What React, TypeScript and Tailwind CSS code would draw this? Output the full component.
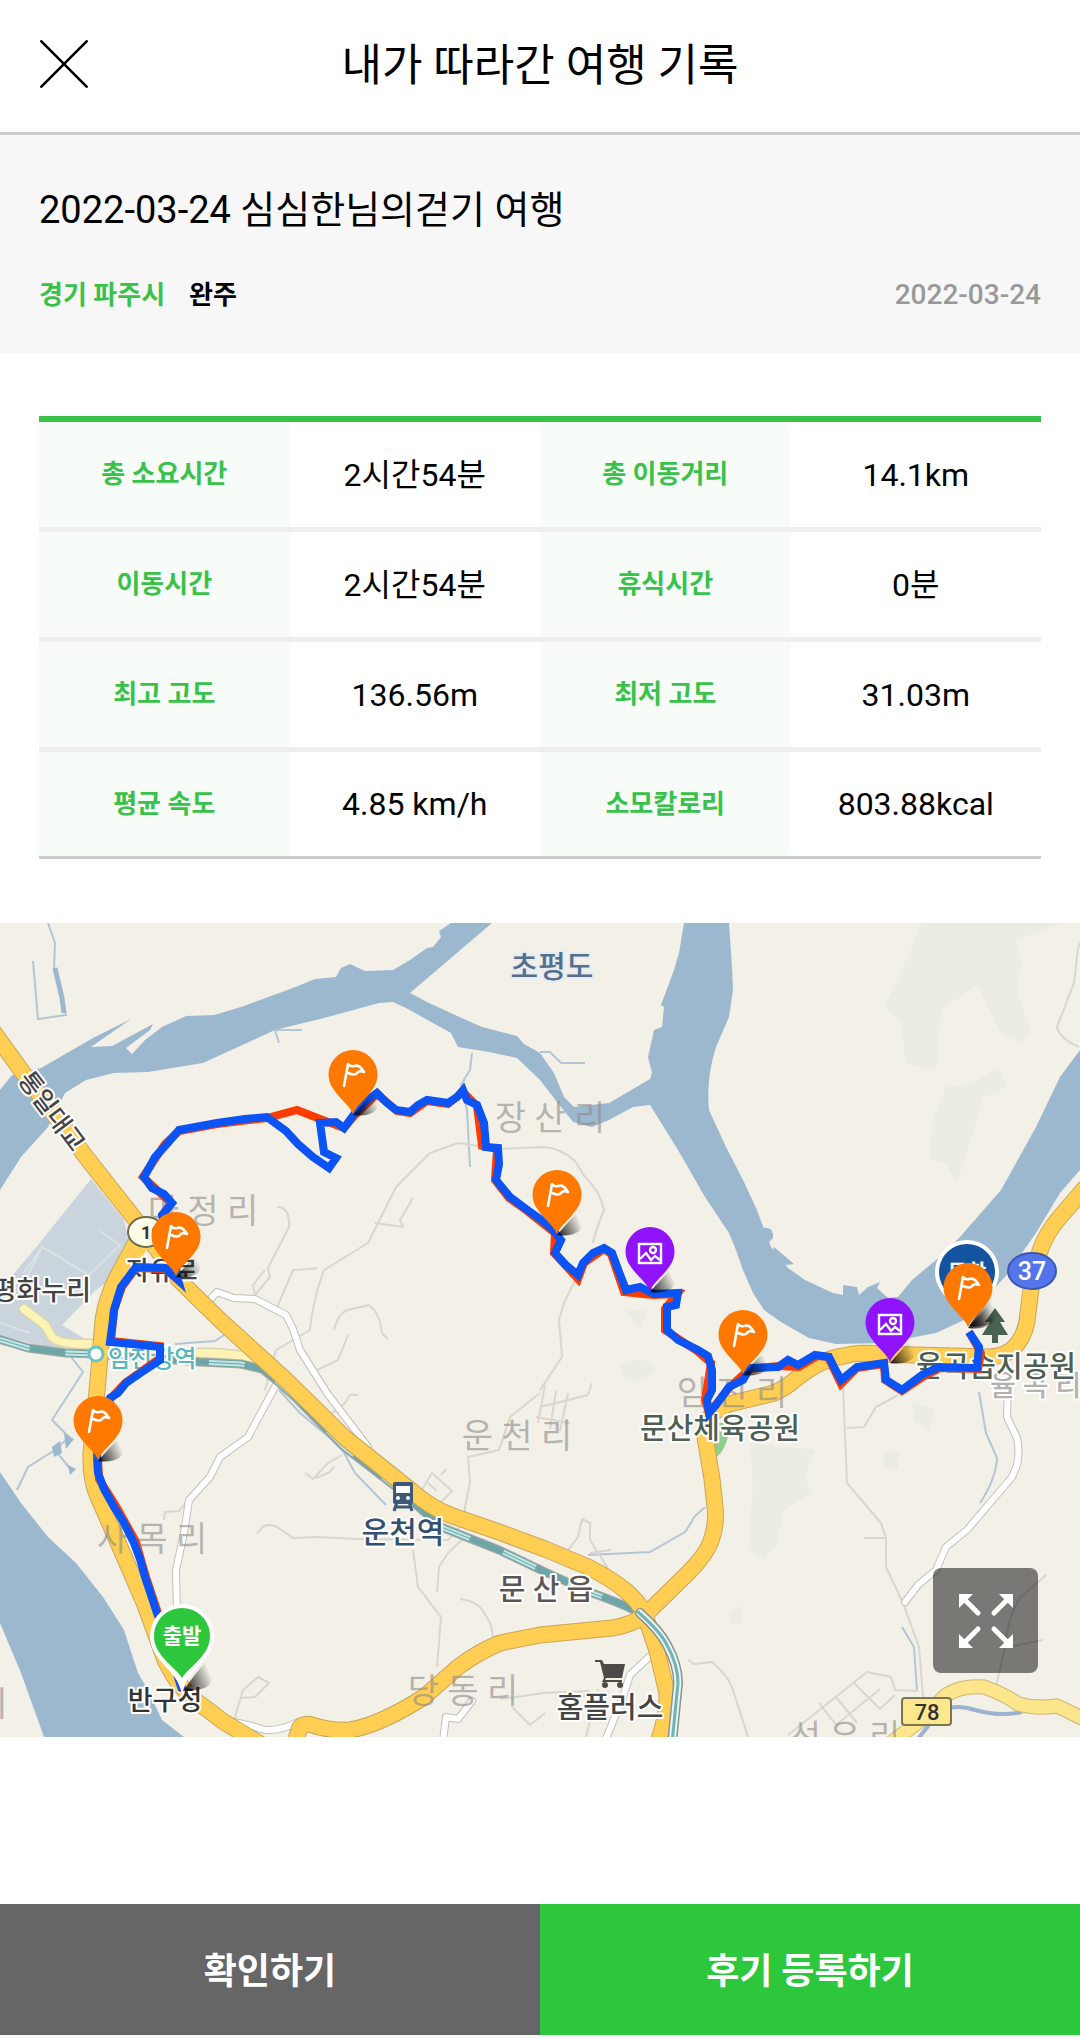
type Stat = { label: string; value: string };

type Point = { x: number; y: number };

type MapLabelProps = Point & {
  text: string;
  size?: number;
  color?: string;
  halo?: string;
  anchor?: "start" | "middle" | "end";
};

const statRows: [Stat, Stat][] = [
  [
    { label: "총 소요시간", value: "2시간54분" },
    { label: "총 이동거리", value: "14.1km" },
  ],
  [
    { label: "이동시간", value: "2시간54분" },
    { label: "휴식시간", value: "0분" },
  ],
  [
    { label: "최고 고도", value: "136.56m" },
    { label: "최저 고도", value: "31.03m" },
  ],
  [
    { label: "평균 속도", value: "4.85 km/h" },
    { label: "소모칼로리", value: "803.88kcal" },
  ],
];

const flagPins: Point[] = [
  { x: 353, y: 152 },
  { x: 176, y: 314 },
  { x: 98, y: 498 },
  { x: 557, y: 272 },
  { x: 743, y: 412 },
  { x: 968, y: 365 },
];

const photoPins: Point[] = [
  { x: 650, y: 329 },
  { x: 890, y: 400 },
];

const townLabels = [
  { text: "장 산 리", x: 550, y: 207 },
  { text: "마 정 리", x: 203, y: 300 },
  { text: "운 천 리", x: 517, y: 525 },
  { text: "사 목 리", x: 152, y: 628 },
  { text: "당 동 리", x: 463, y: 780 },
  { text: "임 진 리", x: 732, y: 482 },
  { text: "선 유 리", x: 845, y: 826 },
  { text: "리", x: -8, y: 793 },
];

const highways = [
  "M-10 104L0 118L21 147L86 234L138 300L179 357L222 399L286 457L344 514L413 569Q430 584 450 592L499 609L545 626L588 644Q612 656 626 668Q640 680 645 692L657 728L667 770Q668 790 658 820",
  "M140 312L117 354Q106 376 103 397L98 457L91 530Q90 556 98 574L120 624L145 682L165 737Q178 764 196 778L224 799L262 822",
  "M294 822L300 804Q306 800 312 802Q330 808 350 807Q380 802 424 774L458 744Q480 728 500 720L540 712L612 705Q632 702 645 692L688 650Q706 632 711 618Q717 602 715 584L712 556L705 514Q706 496 714 489L729 481L774 470Q784 466 796 456Q820 436 844 433Q858 429 880 431L988 434Q1008 434 1018 420Q1027 408 1028 390L1031 366Q1034 345 1040 328Q1046 310 1060 294L1084 266",
];

const whiteRoads = [
  "M210 377L217 369L234 375L255 376L286 392L293 406L300 427L327 470L368 524",
  "M276 462L248 514L220 534L210 554L189 577L184 610L176 647L177 690",
  "M234 799Q250 802 265 807Q280 808 298 799",
  "M443 818L446 794L458 796L472 778",
  "M605 818L623 774L630 752L649 734",
  "M1008 457L1007 494L1017 515Q1020 530 1017 542L1012 554L967 607L946 624L936 647L918 662L905 679",
];

const lanes = [
  "M593 320Q596 306 604 287Q600 268 585 254L575 238Q562 226 545 224L499 226L458 220L430 230L396 264Q378 300 368 320L324 347Q312 380 310 407L276 427L265 467",
  "M578 352L564 380L559 397L562 434L540 467",
  "M277 284Q290 284 289 304L268 345L270 354L255 372L253 362L265 347",
  "M317 345L310 346L293 347L276 387",
  "M334 407Q338 390 348 387L369 382Q380 390 382 410L388 416",
  "M413 275L400 297L403 304L375 300",
  "M348 412L338 437L317 447",
  "M257 610L264 603Q272 600 280 606L293 615L317 614L358 616L448 617Q466 600 465 584L470 560L468 534L499 527L510 494L540 470",
  "M413 627L418 664L441 694L437 744",
  "M467 612L448 630L439 644L437 669",
  "M460 676Q478 678 484 690Q492 700 493 714",
  "M164 597L165 589L179 588L192 572",
  "M234 797L243 767L258 754L269 760L255 774L241 775",
  "M305 550L313 556L328 540L342 532M316 555L330 549L334 543",
  "M330 492L345 480L350 472L358 472",
  "M420 570L432 550L452 568L440 580ZM428 560L437 568M441 552L446 546",
  "M843 464L847 560L881 600L886 615L886 644L903 680L919 724L924 785M864 615L885 615",
  "M898 472L876 484L864 504L847 505",
  "M688 737L694 741L712 739Q728 752 733 767L748 814",
  "M788 812L867 749L891 754L895 767L918 768M836 774L857 800M853 759L880 786M880 786L895 772M819 780L836 802L880 766",
  "M568 627L578 614L582 596L590 600L590 617L609 647M590 630L611 627",
  "M1084 12L1078 25L1074 60L1057 104Q1060 116 1079 124",
  "M1046 652L1020 675Q1008 692 1005 724L995 768M1043 717L1008 724",
  "M540 484L588 472M545 462L538 500M556 468L550 506M568 470L560 508M536 494L570 500M588 472L592 460",
  "M500 776L545 770M512 784L530 802L545 790",
  "M540 770L590 768M560 790L585 772M598 766L586 814M608 768L600 800",
];

const streams = [
  "M48 0L55 20L54 48L62 75L66 92L38 96L33 38",
  "M472 130L470 147L461 162L467 187L470 244",
  "M540 129L550 129L561 140L585 140",
  "M71 434L83 449L52 497L69 514L55 527L72 548M55 527L28 544L17 567",
  "M279 467L300 490L341 524L355 550L386 582",
  "M705 584L694 594Q690 602 685 609L650 629L588 632",
  "M979 469L986 510L997 535Q996 556 980 580",
  "M902 704L914 724L917 768",
  "M175 421L215 418L224 412",
  "M275 107L279 120M275 107L302 107",
];

const rail =
  "M-5 415L28 425L65 430L96 431L200 439L241 441L262 446L276 457L296 475L344 524L396 564L441 604L499 627L545 649L592 670Q626 682 643 692Q660 708 667 722Q678 742 678 760L672 820";

const route =
  "M182 767L172 735L163 705L157 690L151 672L145 654L140 636L134 620L124 600L114 584L104 566L98 550L97 534M97 534L99 500L110 475L118 470L126 460L142 449L160 437L160 424L132 421L110 419L113 397L114 387L121 364L136 344L165 345L178 357L170 330L162 292L172 280L164 271L152 265L144 254L155 234L166 222L179 207L217 200L245 196L267 194L286 208L298 221L313 234L329 245L336 235L324 229L320 200L336 199L344 205L355 190L366 178L377 170L386 179L396 187L410 189L418 182L427 177L448 180L457 174L463 167L467 177L477 182L484 200L486 224L498 225L499 241L496 257L510 274L526 286L540 296L552 306L561 317L555 330L566 342L578 352L583 340L593 330L604 325L612 330L619 349L626 367L640 364L654 371L678 370L676 382L667 384L667 407L678 417L698 427L708 433L712 447L712 467L707 477L709 490L716 482L729 464L743 457L750 445L778 444L788 437L798 442L815 432L829 434L835 446L841 457L857 444L884 440L886 457L902 467L922 452L939 444L977 445L979 424L969 409";

// red course line, the recorded track is painted over it
const course =
  "M183 768L173 735L158 690L146 654L136 619L116 583L99 556L98 534M100 500L111 475L125 460L160 435L160 423L111 418L114 387L122 364L136 345L165 346L178 357M163 292L171 280L143 254L165 221L179 208L217 201L267 195L297 187L320 196L344 205L356 191L377 171L397 188L410 190L427 178L448 181L463 169L477 183L482 223L497 226L495 257L509 275L526 287L555 310L554 330L578 356L584 340L604 326L611 331L624 369L653 372L677 371L665 386L665 407L697 428L711 440L705 477L709 490L729 465L749 446L778 443L799 444L817 433L828 434L841 461L857 445L884 441L885 457L902 468L923 454L940 445L978 446L981 430L969 409";

const rivers = [
  "M0 167L12 152L41 145L93 115L131 96L91 124L112 123L153 101L150 107L126 125L132 131L145 117L162 104L186 93L214 92L241 84L293 65L315 56L336 54L341 45L350 41L365 48L393 47L410 37L427 25L433 24L441 14L439 8L451 0L492 0L410 70L427 79L455 92L482 104L517 113L524 121L540 130L554 150L564 174L574 184L609 180L650 156L652 150L648 134L654 107L662 104L664 84L661 82L674 47L679 30L684 0L729 0L732 44L733 67L729 94L716 124Q706 155 709 187L726 224L743 257L757 287L764 306L771 324L788 345L805 357L833 370L843 372L843 362L857 364L859 372L868 364L880 359L877 365L888 375L898 374L912 357L936 337L960 314L1001 267L1036 204L1060 154L1080 127V247L1060 270L1036 310L1005 354L964 397L936 410L884 420L836 421L809 415L781 399L764 387L753 370L743 347L736 327L729 310L705 274L678 227L650 182L633 184L609 197L592 204L573 199L557 179L540 157L517 135L489 129L458 124L451 110L406 85L393 79L379 80L324 95L275 107L238 124L203 140L148 149L114 150L86 157L65 170L48 204L21 234L0 267Z",
  "M0 549L21 580L48 614L76 640L103 674L124 707L138 750L148 767L162 797L184 814H44L21 750L0 700Z",
  "M763 305Q774 303 773 315L768 320L763 312M774 324L794 341L786 342L772 330Z",
];

const greens = [
  "M922 0L902 47L884 84L902 100L905 140L936 149L941 87L977 62L1001 110L1022 122L1031 107L1017 70L1022 40L1015 17L1063 0Z",
  "M946 164L974 160L998 144L1007 164L984 174L970 220L957 260L945 240L929 237L933 194Z",
  "M750 520L815 527L805 554L812 570L784 587L776 622L764 637L748 627L753 564Z",
  "M620 442Q640 430 655 444Q650 462 625 456ZM912 480L935 486L930 508L914 498ZM884 530L900 528L898 546L884 544ZM728 690L740 682L742 700L730 702ZM626 388L648 386L640 406Z",
];

function MapLabel({
  text,
  x,
  y,
  size = 28,
  color = "#444444",
  halo = "#ffffff",
  anchor = "middle",
}: MapLabelProps) {
  return (
    <text
      x={x}
      y={y}
      fontSize={size}
      fill={color}
      stroke={halo}
      strokeWidth={4}
      strokeLinejoin="round"
      paintOrder="stroke"
      textAnchor={anchor}
      className="font-medium"
    >
      {text}
    </text>
  );
}

function PinBody({ x, y, color }: Point & { color: string }) {
  return (
    <g transform={`translate(${x} ${y})`}>
      <path d="M0 40Q12 26 20 18Q30 28 22 36Q14 42 0 40Z" fill="url(#pin-shadow)" />
      <path d="M0 39C-3 31-13 24-19 15A24.5 24.5 0 1 1 19 15C13 24 3 31 0 39Z" fill={color} />
    </g>
  );
}

function FlagPin({ x, y }: Point) {
  return (
    <g>
      <PinBody x={x} y={y} color="#ff7800" />
      <path
        transform={`translate(${x} ${y})`}
        d="M-9 11L-5 -11Q-3 -8 1 -9Q5 -10 7 -8Q9 -6 11 -3Q6 -5 4 -2Q2 1 -5 -2"
        fill="none"
        stroke="#ffffff"
        strokeWidth="2.6"
        strokeLinecap="round"
        strokeLinejoin="round"
      />
    </g>
  );
}

function PhotoPin({ x, y }: Point) {
  return (
    <g>
      <PinBody x={x} y={y} color="#9013fe" />
      <g transform={`translate(${x} ${y})`} fill="none" stroke="#ffffff" strokeWidth="2.4">
        <rect x="-11" y="-8" width="22" height="19" />
        <circle cx="3" cy="-2" r="3" />
        <path d="M-10 7L-4 1L1 8L5 4L10 8" />
      </g>
    </g>
  );
}

function EndPin({ x, y, color, text }: Point & { color: string; text: string }) {
  return (
    <g transform={`translate(${x} ${y})`}>
      <path d="M2 54Q14 36 24 26Q36 40 26 50Q16 56 2 54Z" fill="url(#pin-shadow)" />
      <path
        d="M0 46C-4 36-16 27-23 16A28 28 0 1 1 23 16C16 27 4 36 0 46Z"
        fill="#ffffff"
        stroke="#ffffff"
        strokeWidth="8"
      />
      <path d="M0 42C-4 35-16 27-23 16A28 28 0 1 1 23 16C16 27 4 35 0 42Z" fill={color} />
      <text y="7" fontSize="21" fill="#ffffff" textAnchor="middle" className="font-bold">
        {text}
      </text>
    </g>
  );
}

function RouteMap() {
  return (
    <svg
      viewBox="0 0 1080 814"
      className="block h-auto w-full bg-[#f3f0e8]"
      role="img"
      aria-label="이동 경로 지도"
    >
      <defs>
        <linearGradient id="pin-shadow" x1="0" y1="1" x2="1" y2="0.6">
          <stop offset="0" stopColor="#000000" stopOpacity="0.9" />
          <stop offset="1" stopColor="#000000" stopOpacity="0" />
        </linearGradient>
      </defs>

      {greens.map((d) => (
        <path key={d} d={d} fill="#ebece4" />
      ))}
      <path d="M91 256L124 297L129 320L114 354L96 367L62 402L88 418L60 428L0 412V367L34 327Z" fill="#c9d4dc" />
      <path d="M20 368L42 324L89 352L120 322L100 308M42 324L24 350M0 400L30 410" fill="none" stroke="#dbe2e6" strokeWidth="2" />
      {rivers.map((d) => (
        <path key={d} d={d} fill="#9cb8cf" />
      ))}
      <g fill="none" stroke="#b4c6d6" strokeWidth="2">
        {streams.map((d) => (
          <path key={d} d={d} />
        ))}
        <path d="M55 45L62 75L64 90" strokeWidth="5" stroke="#9cb8cf" />
        <path d="M918 816L939 789Q955 780 975 787Q1000 794 1022 789" strokeWidth="4" stroke="#9cb3d0" />
      </g>
      <path d="M64 510L74 516L66 526ZM52 524L60 518L62 530L54 534ZM68 542L76 546L70 552Z" fill="#9cb8cf" />
      <g fill="none" stroke="#d9d6cf" strokeWidth="2" strokeLinejoin="round">
        {lanes.map((d) => (
          <path key={d} d={d} />
        ))}
      </g>
      <path d="M700 500H730Q728 532 708 539Z" fill="#8fce8a" />

      <g fill="none" strokeLinejoin="round" strokeLinecap="round">
        <g stroke="#c2c0ba" strokeWidth="8">
          {whiteRoads.map((d) => (
            <path key={d} d={d} />
          ))}
        </g>
        <g stroke="#ffffff" strokeWidth="6">
          {whiteRoads.map((d) => (
            <path key={d} d={d} />
          ))}
        </g>
        <path d="M24 386L45 402L52 414Q60 422 92 421M198 430Q240 430 262 438" stroke="#d8d3b0" strokeWidth="11" />
        <path d="M24 386L45 402L52 414Q60 422 92 421M198 430Q240 430 262 438" stroke="#fdf3b4" strokeWidth="8" />
        <path d="M891 820L922 796L946 772Q962 762 984 764Q1006 772 1018 781Q1036 786 1057 783L1086 797" stroke="#cbb777" strokeWidth="15" />
        <path d="M891 820L922 796L946 772Q962 762 984 764Q1006 772 1018 781Q1036 786 1057 783L1086 797" stroke="#fde58c" strokeWidth="13" />
        <path d={rail} stroke="#a9abaa" strokeWidth="9" />
        <path d={rail} stroke="#73a5a7" strokeWidth="7" strokeLinecap="butt" />
        <path d={rail} stroke="#c3e6e5" strokeWidth="5" strokeDasharray="36 36" strokeLinecap="butt" />
        <path d={rail} stroke="#5fa9a9" strokeWidth="1" />
        <g stroke="#c9a659" strokeWidth="17">
          {highways.map((d) => (
            <path key={d} d={d} />
          ))}
        </g>
        <g stroke="#ffce52" strokeWidth="15">
          {highways.map((d) => (
            <path key={d} d={d} />
          ))}
        </g>
        <path d="M138 304L139 322L126 342" stroke="#ffce52" strokeWidth="18" />
        <path d="M640 690Q660 708 667 722Q678 742 678 760L672 820" stroke="#8d9493" strokeWidth="10" />
        <path d="M640 690Q660 708 667 722Q678 742 678 760L672 820" stroke="#e9f5f4" strokeWidth="7" />
        <path d="M638 689Q660 708 667 722Q678 742 678 760L672 820" stroke="#6fb3b3" strokeWidth="3" />
      </g>

      {townLabels.map((l) => (
        <text
          key={l.text}
          x={l.x}
          y={l.y}
          fontSize={34}
          fill="#8d8a88"
          fillOpacity={0.6}
          textAnchor="middle"
        >
          {l.text}
        </text>
      ))}
      <MapLabel text="율 곡 리" x={990} y={473} anchor="start" color="#b4b2ae" />
      <MapLabel text="초평도" x={552} y={54} size={30} color="#54708c" halo="#e6ecf2" />
      <g transform="translate(52 188) rotate(53)">
        <MapLabel text="통일대교" x={0} y={9} size={25} />
      </g>
      <MapLabel text="평화누리" x={91} y={377} size={27} anchor="end" />
      <ellipse cx="146" cy="309" rx="18" ry="15" fill="#fdfce6" stroke="#6c6b52" strokeWidth="2" />
      <text x="141" y="316" fontSize="18" fill="#333333" className="font-bold">
        10
      </text>
      <MapLabel text="자유로" x={126} y={357} size={26} anchor="start" />
      <circle cx="96" cy="431" r="7" fill="#ffffff" stroke="#6cc3c3" strokeWidth="3" />
      <MapLabel text="임진강역" x={108} y={444} size={24} anchor="start" color="#55b8bc" />
      <MapLabel text="운천역" x={403} y={620} size={30} color="#34506f" />
      <MapLabel text="문 산 읍" x={546} y={677} size={29} color="#5f5654" />
      <MapLabel text="반구정" x={165} y={787} size={27} color="#333333" />
      <MapLabel text="홈플러스" x={610} y={795} size={29} />
      <MapLabel text="문산체육공원" x={720} y={516} size={29} color="#4d5f53" />
      <MapLabel text="율곡습지공원" x={996} y={454} size={29} color="#4d5f53" />

      <g transform="translate(403 559)">
        <path d="M-6 20L-9 29M6 20L9 29M-7 25H7" stroke="#3d5878" strokeWidth="3" />
        <rect x="-10" y="0" width="20" height="22" rx="2" fill="#3d5878" />
        <rect x="-7" y="4" width="14" height="7" fill="#ffffff" />
        <circle cx="-5" cy="16" r="2" fill="#ffffff" />
        <circle cx="5" cy="16" r="2" fill="#ffffff" />
      </g>
      <g transform="translate(595 737)" fill="#4d4a48">
        <path d="M0 0H7L9 4H30L27 18H11L10 20H27V22H7L9 18L5 2H0Z" />
        <circle cx="10" cy="25" r="3" />
        <circle cx="25" cy="25" r="3" />
      </g>
      <ellipse cx="1032" cy="348" rx="24" ry="18" fill="#5474ea" stroke="#3c58b4" strokeWidth="2" />
      <text x="1032" y="357" fontSize="25" fill="#ffffff" textAnchor="middle" className="font-medium">
        37
      </text>
      <rect x="902" y="775" width="49" height="27" rx="3" fill="#fbe88c" stroke="#7d7452" strokeWidth="2" />
      <text x="927" y="797" fontSize="22" fill="#333333" textAnchor="middle" className="font-medium">
        78
      </text>
      <path d="M995 385L1005 399H1000L1008 412H998V420H992V412H982L990 399H985Z" fill="#49614f" />

      <g fill="none" strokeLinejoin="miter">
        <path d={course} stroke="#ff3c00" strokeWidth="8" />
        <path d={route} stroke="#0b53f5" strokeWidth="8" />
      </g>

      <EndPin x={967} y={349} color="#1453a0" text="도착" />
      {flagPins.map((p) => (
        <FlagPin key={`${p.x}-${p.y}`} {...p} />
      ))}
      {photoPins.map((p) => (
        <PhotoPin key={`${p.x}-${p.y}`} {...p} />
      ))}
      <EndPin x={182} y={713} color="#2cc73d" text="출발" />
    </svg>
  );
}

const labelCellCls = "w-1/4 bg-[#f8fcf9] text-center text-[26px] font-bold text-[#39c24a]";

const valueCellCls = "w-1/4 text-center text-[32px] text-black";

const footerBtnCls = "h-[131px] flex-1 pt-1 text-[36px] font-bold text-white";

export default function App() {
  return (
    <div className="flex min-h-screen flex-col bg-white font-[Roboto,'Noto_Sans_CJK_KR',sans-serif] text-black">
      <header className="flex h-[135px] items-center border-b-[3px] border-[#cccccc] px-10 pb-1">
        <button type="button" aria-label="닫기" className="size-12 shrink-0">
          <svg viewBox="0 0 48 48" className="size-12" stroke="#000000" strokeWidth="2.6">
            <path d="M0.5 0.5L47.5 47.5M47.5 0.5L0.5 47.5" />
          </svg>
        </button>
        <h1 className="flex-1 pt-1 text-center text-[44px] leading-none">내가 따라간 여행 기록</h1>
        <div className="w-12 shrink-0" />
      </header>

      <section className="bg-[#f7f7f7] px-[39px] pt-12 pb-9">
        <h2 className="text-[38px] leading-[54px]">2022-03-24 심심한님의걷기 여행</h2>
        <div className="mt-9 flex items-center text-[26px] leading-[44px] font-bold">
          <span className="text-[#39c24a]">경기 파주시</span>
          <span className="ml-6">완주</span>
          <time className="ml-auto text-[28px] font-medium text-[#999999]">2022-03-24</time>
        </div>
      </section>

      <main className="flex-1 pb-40">
        <div className="px-[39px] pt-[63px] pb-16">
          <table className="w-full table-fixed border-separate border-spacing-0 border-t-[6px] border-b-[3px] border-t-[#39c24a] border-b-[#cccccc]">
            <tbody>
              {statRows.map((row, i) => {
                const line = i < statRows.length - 1 ? "h-[110px] border-b-[5px] border-[#eeeeee]" : "h-[104px]";
                return (
                  <tr key={row[0].label}>
                    <th scope="row" className={`${labelCellCls} ${line}`}>
                      {row[0].label}
                    </th>
                    <td className={`${valueCellCls} ${line}`}>{row[0].value}</td>
                    <th scope="row" className={`${labelCellCls} ${line}`}>
                      {row[1].label}
                    </th>
                    <td className={`${valueCellCls} ${line}`}>{row[1].value}</td>
                  </tr>
                );
              })}
            </tbody>
          </table>
        </div>

        <div className="relative overflow-hidden">
          <RouteMap />
          <button
            type="button"
            aria-label="지도 크게 보기"
            className="absolute right-[42px] bottom-16 flex size-[105px] items-center justify-center rounded-lg bg-black/50"
          >
            <svg viewBox="0 0 54 54" className="size-[54px]" fill="#ffffff">
              <g id="arrow">
                <path d="M0 0H14L0 14Z" />
                <path d="M5 5L19 19" stroke="#ffffff" strokeWidth="5" strokeLinecap="round" />
              </g>
              <use href="#arrow" transform="translate(54 0) scale(-1 1)" />
              <use href="#arrow" transform="translate(0 54) scale(1 -1)" />
              <use href="#arrow" transform="translate(54 54) scale(-1 -1)" />
            </svg>
          </button>
        </div>
      </main>

      <footer className="flex bg-[#f7f7f7] pb-[3px]">
        <button type="button" className={`${footerBtnCls} bg-[#666666]`}>
          확인하기
        </button>
        <button type="button" className={`${footerBtnCls} bg-[#2cc73d]`}>
          후기 등록하기
        </button>
      </footer>
    </div>
  );
}
